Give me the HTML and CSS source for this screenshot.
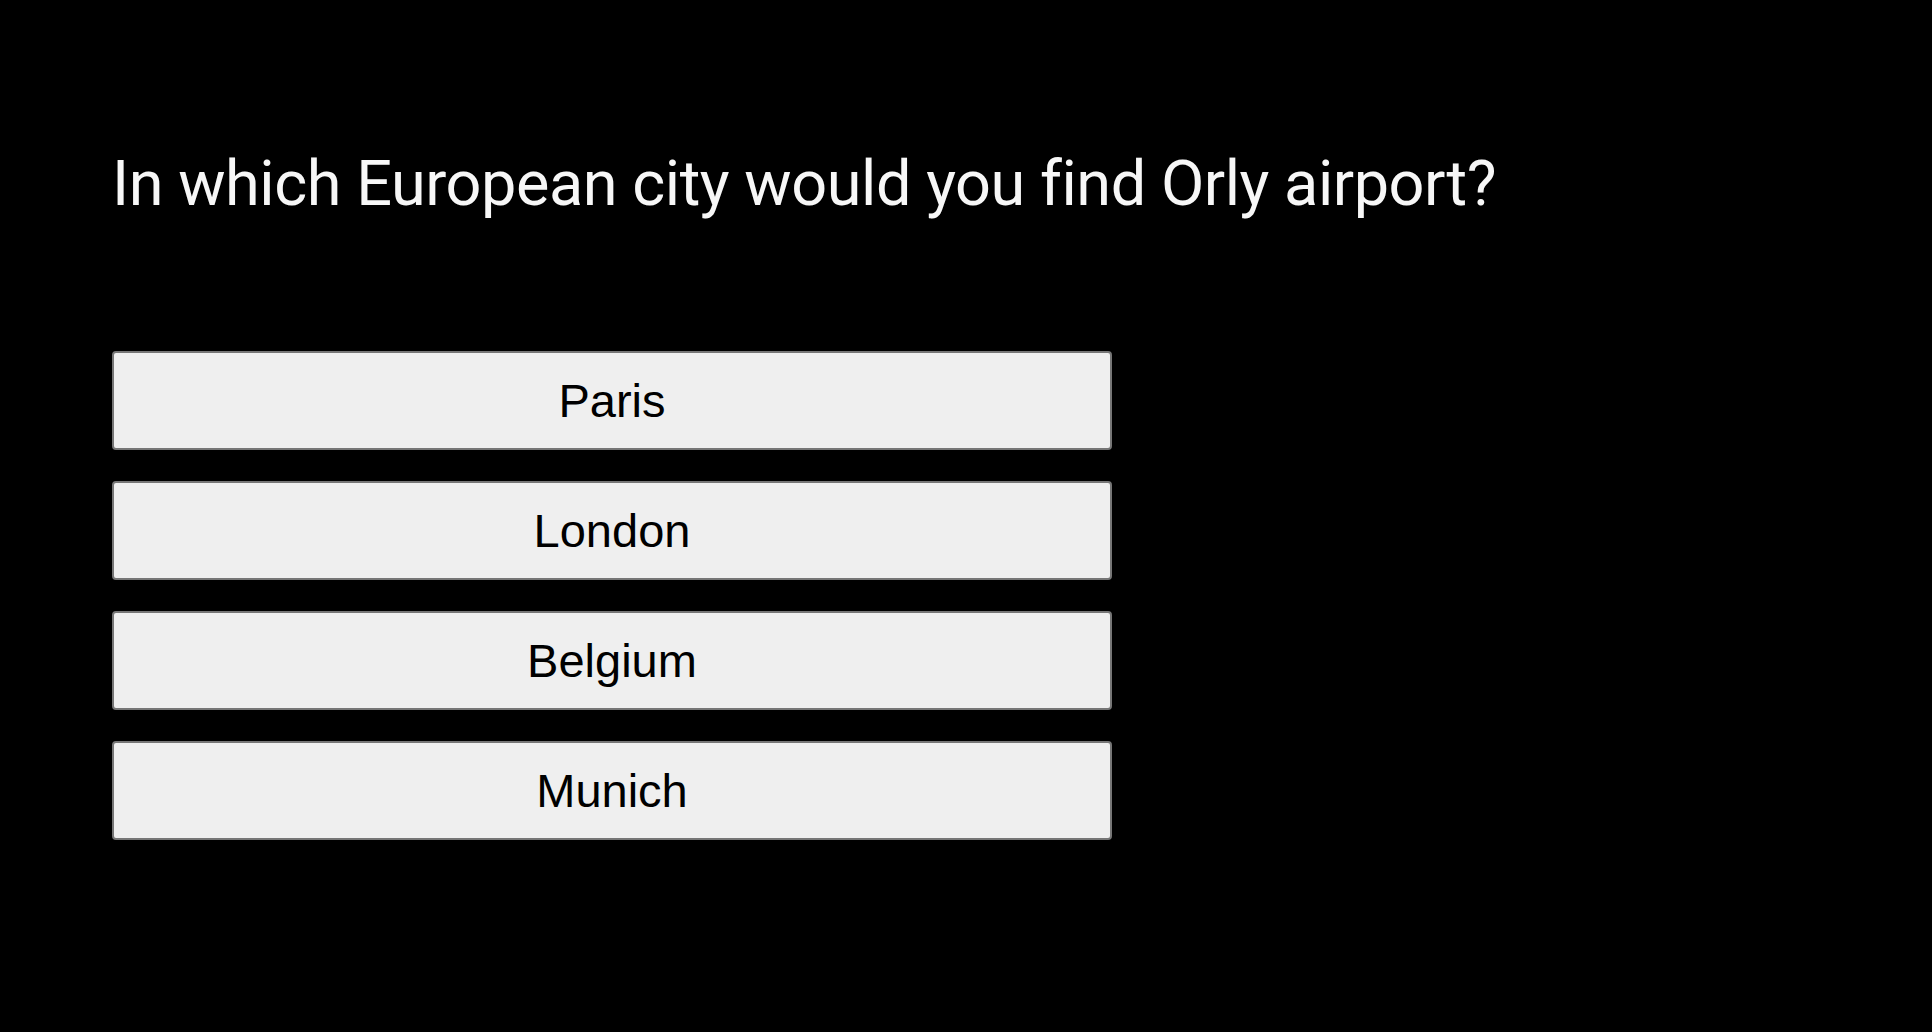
FILE: index.html
```html
<!DOCTYPE html>
<html lang="en">
<head>
<meta charset="utf-8">
<title>Quiz</title>
<link rel="stylesheet" href="styles.css">
</head>
<body>
<main class="quiz">
  <h1 class="question">In which European city would you find Orly airport?</h1>
  <div class="answers">
    <button class="answer">Paris</button>
    <button class="answer">London</button>
    <button class="answer">Belgium</button>
    <button class="answer">Munich</button>
  </div>
</main>
</body>
</html>
```

FILE: styles.css
```css
html, body {
  margin: 0;
  padding: 0;
  background: #000;
  height: 100%;
}
.quiz {
  padding: 0 0 0 112px;
  display: flex;
  flex-direction: column;
}
.question {
  margin: 0;
  padding-top: 146px;
  font-family: Roboto, "Noto Sans", sans-serif;
  font-weight: 400;
  font-size: 63px;
  line-height: 75px;
  color: #f7f7f7;
  letter-spacing: -0.45px;
}
.answers {
  margin-top: 130px;
  display: flex;
  flex-direction: column;
  gap: 31px;
  width: 1000px;
}
.answer {
  box-sizing: border-box;
  height: 99px;
  width: 100%;
  background: #efefef;
  border: 2px solid #767676;
  border-radius: 4px;
  font-family: "Liberation Sans", Arial, sans-serif;
  font-size: 47px;
  color: #000;
  padding: 0;
}
```
